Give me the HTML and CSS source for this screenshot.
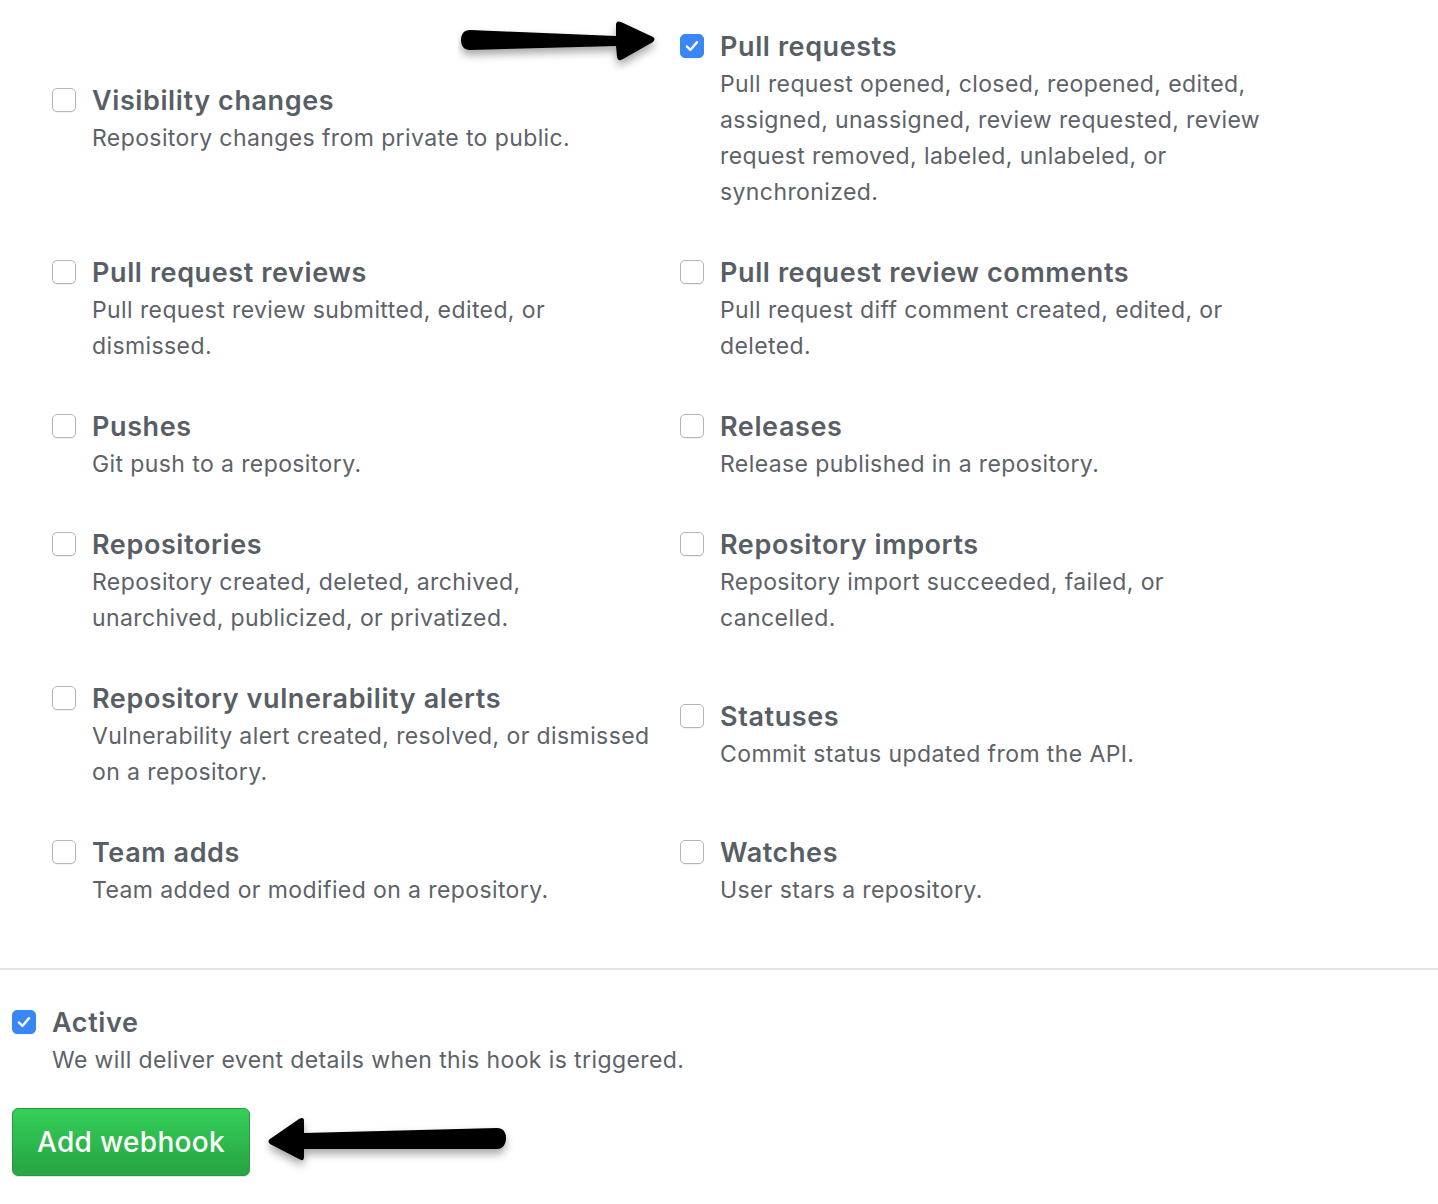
FILE: index.html
```html
<!DOCTYPE html>
<html>
<head>
<meta charset="utf-8">
<link rel="stylesheet" href="styles.css">
</head>
<body>
<div class="page">
  <div class="events">
    <div class="event pad-54">
      <span class="cb"></span>
      <div class="body"><div class="title">Visibility changes</div><p class="desc">Repository changes from private to public.</p></div>
    </div>
    <div class="event">
      <span class="cb checked"><svg viewBox="0 0 24 24" width="24" height="24"><path d="M6.5 12.5 L10.2 16.3 L17.5 7.8" fill="none" stroke="#fff" stroke-width="2.6" stroke-linecap="round" stroke-linejoin="round"/></svg></span>
      <div class="body"><div class="title">Pull requests</div><p class="desc">Pull request opened, closed, reopened, edited, assigned, unassigned, review requested, review request removed, labeled, unlabeled, or synchronized.</p></div>
    </div>
    <div class="event">
      <span class="cb"></span>
      <div class="body"><div class="title">Pull request reviews</div><p class="desc">Pull request review submitted, edited, or dismissed.</p></div>
    </div>
    <div class="event">
      <span class="cb"></span>
      <div class="body"><div class="title">Pull request review comments</div><p class="desc">Pull request diff comment created, edited, or deleted.</p></div>
    </div>
    <div class="event">
      <span class="cb"></span>
      <div class="body"><div class="title">Pushes</div><p class="desc">Git push to a repository.</p></div>
    </div>
    <div class="event">
      <span class="cb"></span>
      <div class="body"><div class="title">Releases</div><p class="desc">Release published in a repository.</p></div>
    </div>
    <div class="event">
      <span class="cb"></span>
      <div class="body"><div class="title">Repositories</div><p class="desc">Repository created, deleted, archived, unarchived, publicized, or privatized.</p></div>
    </div>
    <div class="event">
      <span class="cb"></span>
      <div class="body"><div class="title">Repository imports</div><p class="desc">Repository import succeeded, failed, or cancelled.</p></div>
    </div>
    <div class="event">
      <span class="cb"></span>
      <div class="body"><div class="title">Repository vulnerability alerts</div><p class="desc">Vulnerability alert created, resolved, or dismissed on a repository.</p></div>
    </div>
    <div class="event pad-18">
      <span class="cb"></span>
      <div class="body"><div class="title">Statuses</div><p class="desc">Commit status updated from the API.</p></div>
    </div>
    <div class="event">
      <span class="cb"></span>
      <div class="body"><div class="title">Team adds</div><p class="desc">Team added or modified on a repository.</p></div>
    </div>
    <div class="event">
      <span class="cb"></span>
      <div class="body"><div class="title">Watches</div><p class="desc">User stars a repository.</p></div>
    </div>
  </div>

  <hr class="divider">

  <div class="event active">
    <span class="cb checked"><svg viewBox="0 0 24 24" width="24" height="24"><path d="M6.5 12.5 L10.2 16.3 L17.5 7.8" fill="none" stroke="#fff" stroke-width="2.6" stroke-linecap="round" stroke-linejoin="round"/></svg></span>
    <div class="body"><div class="title">Active</div><p class="desc wide">We will deliver event details when this hook is triggered.</p></div>
  </div>

  <button class="btn">Add webhook</button>

  <svg class="arrow arrow-top" width="220" height="70" viewBox="0 0 220 70">
    <defs>
      <filter id="sh1" x="-20%" y="-40%" width="140%" height="200%">
        <feDropShadow dx="0" dy="5" stdDeviation="4" flood-color="#000" flood-opacity="0.35"/>
      </filter>
    </defs>
    <path filter="url(#sh1)" d="M12 18 C6 18 3 22 3 28 C3 34 6 38 12 38 L158 34 L159 45 Q160 50 165 47 L195 30 Q198 27 195 25 L163 10 Q158 8 158 13 L158 24 Z" fill="#000"/>
  </svg>

  <svg class="arrow arrow-bottom" width="260" height="80" viewBox="0 0 260 80">
    <defs>
      <filter id="sh2" x="-20%" y="-40%" width="140%" height="200%">
        <feDropShadow dx="0" dy="5" stdDeviation="4" flood-color="#000" flood-opacity="0.35"/>
      </filter>
    </defs>
    <path filter="url(#sh2)" d="M233 21 C239 21 242 25 242 31 C242 37 239 42 233 42 L40 42 L40 50 Q40 55 35 52 L6 37 Q3 34 6 32 L35 12 Q40 9 40 14 L40 26 Z" fill="#000"/>
  </svg>
</div>
</body>
</html>
```

FILE: styles.css
```css
* { box-sizing: border-box; }
html, body { margin: 0; padding: 0; background: #fff; }
body {
  font-family: Inter, "Noto Sans", "Liberation Sans", sans-serif;
  color: #586069;
}
.page {
  position: relative;
  width: 1438px;
  height: 1204px;
  overflow: hidden;
  padding: 28px 0 0 12px;
}
.events {
  margin-left: 40px;
  display: grid;
  grid-template-columns: 628px 628px;
  row-gap: 44px;
  align-items: start;
}
.event {
  display: flex;
  align-items: flex-start;
}
.pad-54 { padding-top: 54px; }
.pad-18 { padding-top: 18px; }
.cb {
  flex: none;
  width: 24px;
  height: 24px;
  margin-top: 6px;
  margin-right: 16px;
  border: 1.5px solid #b5b5b5;
  border-radius: 5px;
  background: #fff;
  box-shadow: 0 1px 1px rgba(0,0,0,0.06);
  display: flex;
  align-items: center;
  justify-content: center;
}
.cb.checked {
  background: #3a86f5;
  border-color: #3a86f5;
}
.cb svg { display: block; }
.body { flex: 1; }
.title {
  font-size: 27px;
  font-weight: 600;
  line-height: 38px;
  letter-spacing: 0.6px;
  color: #585e65;
}
.desc {
  margin: 0;
  max-width: 560px;
  font-size: 23px;
  line-height: 36px;
  letter-spacing: 0.4px;
  color: #5d6269;
}
.desc.wide { max-width: none; }
.divider {
  border: 0;
  border-top: 2px solid #e3e4e6;
  margin: 60px 0 0 -12px;
  width: 1438px;
}
.active { margin-top: 34px; }
.btn {
  display: block;
  margin-top: 30px;
  width: 238px;
  height: 68px;
  border: 1px solid #27993f;
  border-radius: 6px;
  background: linear-gradient(#34d058, #28a745 90%);
  color: #fff;
  font-family: inherit;
  font-size: 28px;
  font-weight: 500;
  letter-spacing: 0.3px;
  padding: 0;
  box-shadow: 0 1px 0 rgba(0,0,0,0.1);
}
.arrow { position: absolute; }
.arrow-top { left: 458px; top: 12px; }
.arrow-bottom { left: 264px; top: 1107px; }
```
